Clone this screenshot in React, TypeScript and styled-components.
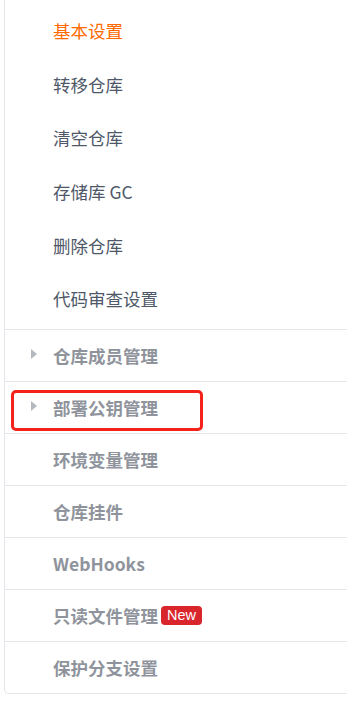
import * as React from 'react'
import styled, { createGlobalStyle } from 'styled-components'

const GlobalStyle = createGlobalStyle`
  html, body {
    margin: 0;
    padding: 0;
    background: #fff;
    overflow: hidden;
  }
  body {
    font-family: "Noto Sans CJK SC", "Noto Sans", sans-serif;
  }
`

const Panel = styled.div`
  margin-left: 4px;
  width: 380px;
  border: 1px solid #e3e6ea;
  border-top: 0;
  border-right: 0;
  border-radius: 0 0 0 5px;
  background: #fff;
`
const SubList = styled.div`
  padding: 4px 0 3px;
`
const SubItem = styled.div<{ $active?: boolean }>`
  height: 53.6px;
  display: flex;
  align-items: center;
  padding-left: 48px;
  font-size: 17.5px;
  color: ${p => (p.$active ? '#ff6a00' : '#4e5869')};
`
const Section = styled.div`
  position: relative;
  height: 51px;
  border-top: 1px solid #e3e6ea;
  display: flex;
  align-items: center;
  padding-left: 26px;
  font-size: 17.5px;
  font-weight: 700;
  color: #8f949c;
`
const Caret = styled.span<{ $show?: boolean }>`
  width: 0;
  height: 0;
  margin-right: 16px;
  margin-top: -2px;
  border-top: 5px solid transparent;
  border-bottom: 5px solid transparent;
  border-left: 6px solid ${p => (p.$show ? '#b4b8bf' : 'transparent')};
`
const Badge = styled.span`
  margin-left: 3px;
  background: #d9262c;
  color: #fff;
  font-family: "Liberation Sans", Arial, sans-serif;
  font-weight: 400;
  font-size: 14.5px;
  line-height: 19px;
  padding: 0 6px;
  border-radius: 4px;
`
const Highlight = styled.div`
  position: absolute;
  left: 6px;
  top: 8px;
  width: 192px;
  height: 41px;
  box-sizing: border-box;
  border: 3px solid #f5221b;
  border-radius: 5px;
  pointer-events: none;
`

const subItems = ['基本设置', '转移仓库', '清空仓库', '存储库 GC', '删除仓库', '代码审查设置']

const sections: { label: string; caret?: boolean; highlight?: boolean; badge?: string }[] = [
  { label: '仓库成员管理', caret: true },
  { label: '部署公钥管理', caret: true, highlight: true },
  { label: '环境变量管理' },
  { label: '仓库挂件' },
  { label: 'WebHooks' },
  { label: '只读文件管理', badge: 'New' },
  { label: '保护分支设置' },
]

export default function App() {
  return (
    <>
      <GlobalStyle />
      <Panel>
        <SubList>
          {subItems.map((s, i) => (
            <SubItem key={s} $active={i === 0}>{s}</SubItem>
          ))}
        </SubList>
        {sections.map(s => (
          <Section key={s.label}>
            <Caret $show={s.caret} />
            {s.label}
            {s.badge && <Badge>{s.badge}</Badge>}
            {s.highlight && <Highlight />}
          </Section>
        ))}
      </Panel>
    </>
  )
}
